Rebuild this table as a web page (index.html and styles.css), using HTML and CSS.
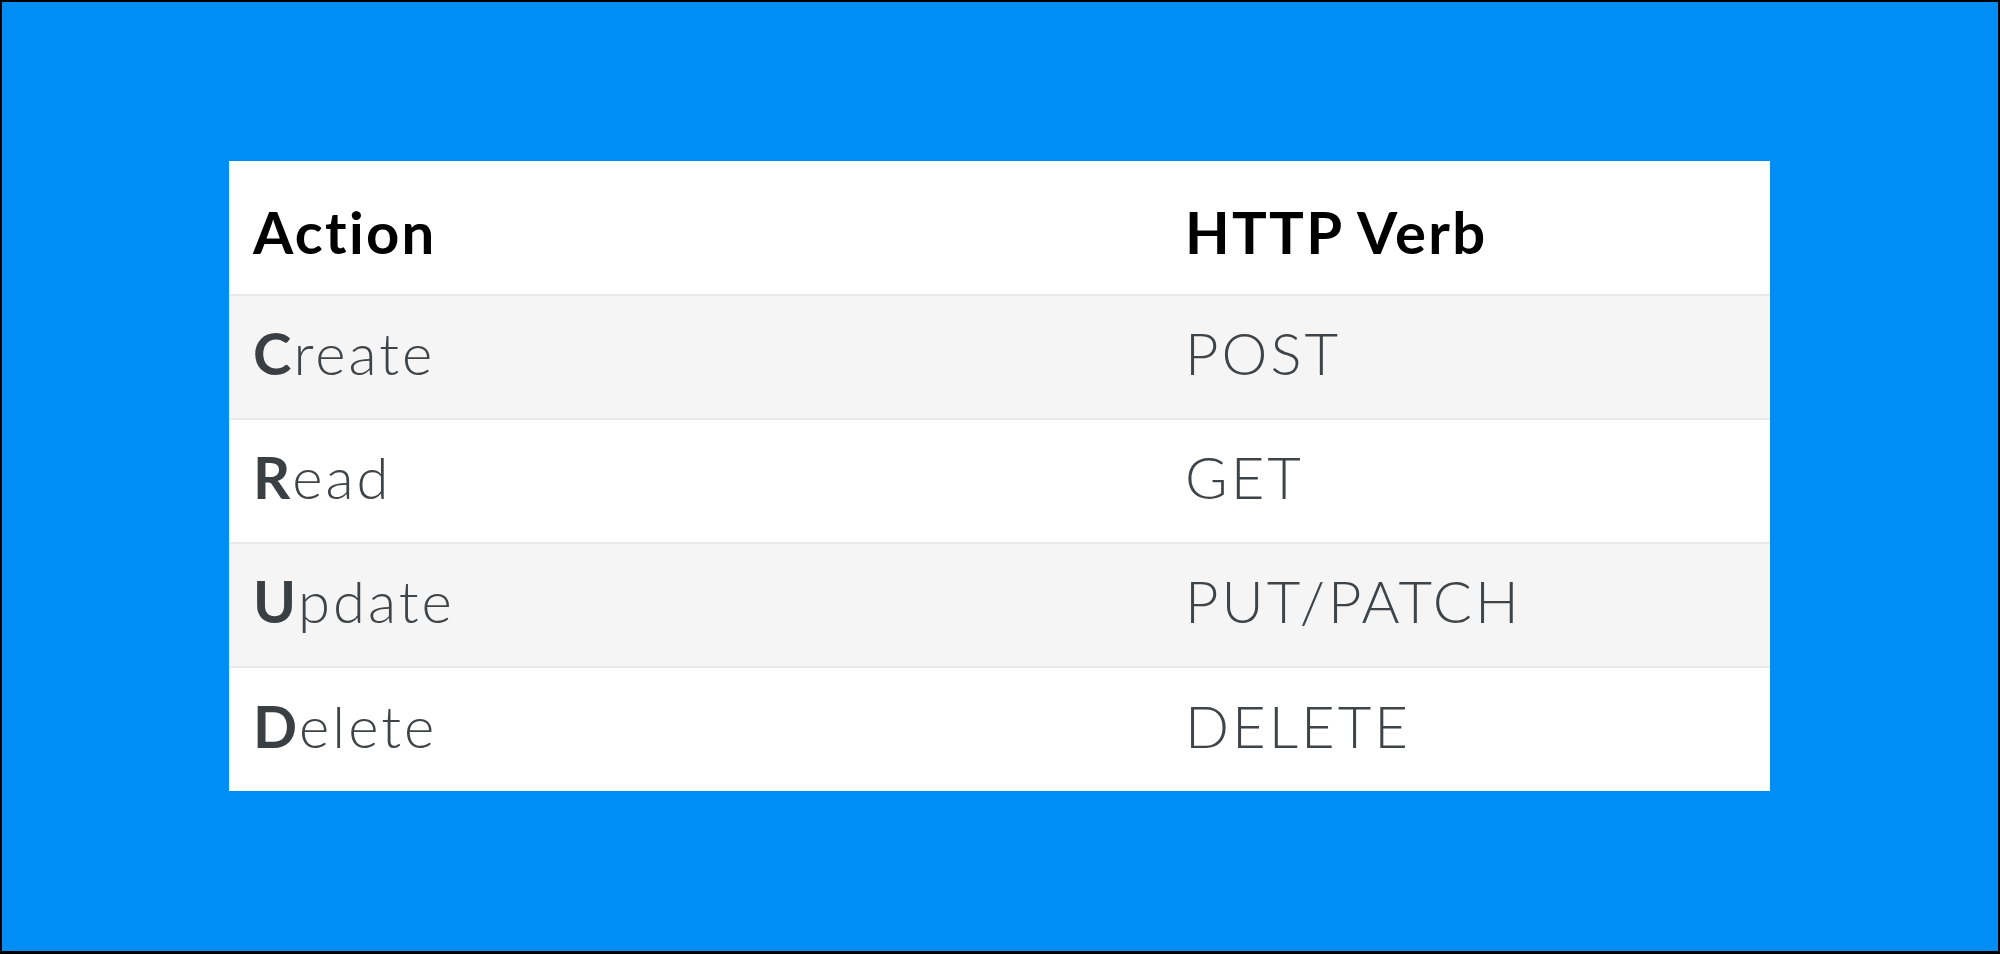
FILE: index.html
```html
<!DOCTYPE html>
<html>
<head>
<meta charset="utf-8">
<link rel="stylesheet" href="styles.css">
</head>
<body>
<div class="frame">
  <table class="crud">
    <colgroup><col class="c1"><col class="c2"></colgroup>
    <thead>
      <tr><th>Action</th><th>HTTP Verb</th></tr>
    </thead>
    <tbody>
      <tr class="alt"><td><b>C</b>reate</td><td>POST</td></tr>
      <tr><td><b>R</b>ead</td><td>GET</td></tr>
      <tr class="alt"><td><b>U</b>pdate</td><td>PUT/PATCH</td></tr>
      <tr><td><b>D</b>elete</td><td>DELETE</td></tr>
    </tbody>
  </table>
</div>
</body>
</html>
```
FILE: styles.css
```css
html, body { margin: 0; padding: 0; }
body { width: 2000px; height: 954px; overflow: hidden; }
.frame {
  box-sizing: border-box;
  width: 2000px;
  height: 954px;
  border: 2px solid #000;
  border-bottom-width: 3px;
  background: #008ef6;
  padding: 159px 0 0 227px;
}
.crud {
  border-collapse: collapse;
  width: 1541px;
  table-layout: fixed;
  background: #fff;
  font-family: "Lato", "Open Sans", sans-serif;
}
.c1 { width: 932px; }
.c2 { width: 609px; }
.crud th {
  height: 134px;
  padding: 7px 24px 0;
  text-align: left;
  font-size: 58px;
  font-weight: 700;
  letter-spacing: 2.3px;
  color: #000;
  vertical-align: middle;
  box-sizing: border-box;
}
.crud td {
  height: 124px;
  padding: 0 24px 9px;
  font-size: 58px;
  font-weight: 300;
  letter-spacing: 3px;
  color: #3f4448;
  border-top: 2px solid #e9e9e9;
  vertical-align: middle;
  box-sizing: border-box;
}
.crud td b { font-weight: 700; color: #3a3f43; letter-spacing: 2px; }
.crud tr.alt td { background: #f5f5f5; }
```
